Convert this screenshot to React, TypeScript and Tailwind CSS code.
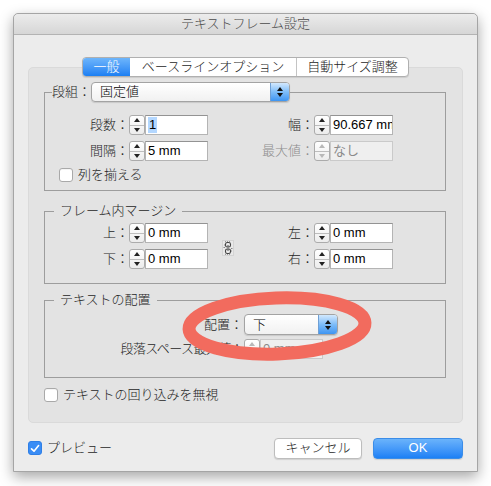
import React from "react";

const FONT = "font-['Liberation_Sans','Noto_Sans_CJK_JP',sans-serif]";

function Spinner({ disabled = false }: { disabled?: boolean }) {
  const fill = disabled ? "#b8b8b8" : "#222";
  return (
    <div className="flex flex-col w-[16px] h-[20px] shrink-0 border border-[#ababab] rounded-[3px] bg-linear-to-b from-white to-[#ececec]">
      <div className="flex-1 flex items-center justify-center border-b border-[#bdbdbd]">
        <svg width="6" height="4" viewBox="0 0 6 4">
          <path d="M3 0L6 4H0Z" fill={fill} />
        </svg>
      </div>
      <div className="flex-1 flex items-center justify-center">
        <svg width="6" height="4" viewBox="0 0 6 4">
          <path d="M0 0H6L3 4Z" fill={fill} />
        </svg>
      </div>
    </div>
  );
}

function Field({
  value,
  selected = false,
  disabled = false,
}: {
  value: string;
  selected?: boolean;
  disabled?: boolean;
}) {
  return (
    <div className="flex h-[20px]">
      <Spinner disabled={disabled} />
      <div
        className={`w-[63px] h-[20px] flex items-center pl-[2px] overflow-hidden whitespace-nowrap text-[13px] leading-[16px] font-normal border ${
          disabled
            ? "bg-[#efefef] border-[#cacaca] text-[#8a8a8a]"
            : "bg-white border-[#b4b4b4] border-t-[#939393] text-black"
        }`}
      >
        {selected ? <span className="bg-[#b3d7ff] px-[1px]">{value}</span> : value}
      </div>
    </div>
  );
}

function Select({ value, width }: { value: string; width: string }) {
  return (
    <div
      className={`${width} h-[20px] flex border border-[#a3a3a3] rounded-[4px] bg-linear-to-b from-white to-[#f1f1f1] shadow-[0_1px_1px_rgba(0,0,0,0.12)]`}
    >
      <div className="flex-1 flex items-center pl-[8px] text-[13px] leading-[16px] text-black">
        {value}
      </div>
      <div className="w-[19px] flex flex-col items-center justify-center gap-[2px] rounded-r-[3px] bg-linear-to-b from-[#d2e8fd] via-[#7dbcf8] to-[#3d95f2] border-l border-[#6f9fd4]">
        <svg width="6" height="4" viewBox="0 0 6 4">
          <path d="M3 0L6 4H0Z" fill="#111" />
        </svg>
        <svg width="6" height="4" viewBox="0 0 6 4">
          <path d="M0 0H6L3 4Z" fill="#111" />
        </svg>
      </div>
    </div>
  );
}

function Group({
  header,
  headerH,
  lead,
  className = "",
  bodyClass = "",
  children,
}: {
  header: React.ReactNode;
  headerH: string;
  lead: string;
  className?: string;
  bodyClass?: string;
  children: React.ReactNode;
}) {
  return (
    <div className={`ml-[15px] mr-[16px] ${className}`}>
      <div className={`flex ${headerH}`}>
        <div className={`${lead} h-1/2 self-end border-l border-t border-[#9d9d9d]`} />
        <div className="flex items-center">{header}</div>
        <div className="flex-1 h-1/2 self-end border-r border-t border-[#9d9d9d]" />
      </div>
      <div className={`border-l border-r border-b border-[#9d9d9d] ${bodyClass}`}>{children}</div>
    </div>
  );
}

function Label({
  w,
  text,
  dim = false,
  tight = false,
}: {
  w: string;
  text: string;
  dim?: boolean;
  tight?: boolean;
}) {
  return (
    <div
      className={`${w} shrink-0 text-right text-[13px] leading-[16px] whitespace-nowrap ${
        tight ? "tracking-[-0.6px]" : ""
      } ${dim ? "text-[#8c8c8c]" : "text-[#1e1e1e]"}`}
    >
      {text}
    </div>
  );
}

function Check({ checked = false }: { checked?: boolean }) {
  if (checked) {
    return (
      <div className="w-[14px] h-[14px] rounded-[3px] bg-[#3a8df5] border border-[#2f7fe6] flex items-center justify-center">
        <svg width="10" height="9" viewBox="0 0 10 9">
          <path d="M1.5 4.8L4 7.2L8.6 1.5" fill="none" stroke="white" strokeWidth="1.6" strokeLinecap="round" strokeLinejoin="round" />
        </svg>
      </div>
    );
  }
  return (
    <div className="w-[14px] h-[14px] rounded-[3px] bg-white border border-[#a9a9a9] shadow-[inset_0_1px_0_rgba(0,0,0,0.04)]" />
  );
}

function LinkIcon() {
  return (
    <svg width="12" height="16" viewBox="0 0 12 16">
      <rect x="0.5" y="0.5" width="11" height="15" fill="#e9e9e9" stroke="#c2c2c2" strokeDasharray="1 1" />
      <path d="M3 1.5H9M3 14.5H9" stroke="#9a9a9a" strokeDasharray="1 1" />
      <rect x="3.5" y="2.5" width="5" height="4.5" rx="1.8" fill="none" stroke="#444" strokeWidth="1.1" />
      <rect x="3.5" y="9" width="5" height="4.5" rx="1.8" fill="none" stroke="#444" strokeWidth="1.1" />
      <path d="M6 5V7.3M6 8.7V11" stroke="#555" strokeWidth="1" />
      <path d="M1.5 7.5H3M9 8.5H10.5M2 5H3M9 11H10" stroke="#888" strokeWidth="1" />
    </svg>
  );
}

export default function App() {
  return (
    <div className={`w-[491px] h-[486px] bg-white p-[13px] font-light ${FONT}`}>
      <div className="relative w-[465px] h-[459px] flex flex-col bg-[#ececec] border border-[#a5a5a5] rounded-t-[5px] shadow-[0_5px_14px_rgba(0,0,0,0.35)]">
        {/* Title bar */}
        <div className="h-[21px] shrink-0 flex items-center justify-center rounded-t-[5px] bg-linear-to-b from-[#ececec] to-[#d6d6d6] border-b border-[#b3b3b3] text-[13px] leading-[16px] text-[#4a4a4a]">
          テキストフレーム設定
        </div>

        <div className="flex-1 flex flex-col px-[14px] pt-[22px]">
          {/* Tabs */}
          <div className="relative z-10 flex justify-center">
            <div className="flex h-[20px] rounded-[4px] border border-[#b0b0b0] bg-white shadow-[0_1px_1px_rgba(0,0,0,0.1)] text-[13px] leading-[16px] text-[#1e1e1e] overflow-hidden">
              <div className="w-[47px] flex items-center justify-center bg-linear-to-b from-[#6db5fb] to-[#1a7ff3] text-white">
                一般
              </div>
              <div className="w-[166px] flex items-center justify-center">ベースラインオプション</div>
              <div className="w-[112px] flex items-center justify-center border-l border-[#c4c4c4]">
                自動サイズ調整
              </div>
            </div>
          </div>

          {/* Panel */}
          <div className="-mt-[10px] h-[356px] shrink-0 flex flex-col pt-[14px] rounded-[5px] bg-[#e3e3e3] border border-[#dadada]">
            {/* 段組 */}
            <Group
              headerH="h-[20px]"
              lead="w-[8px]"
              bodyClass="pt-[13px] pb-[8px]"
              header={
                <div className="flex items-center">
                  <span className="text-[13px] leading-[16px] text-[#1e1e1e]">段組：</span>
                  <Select value="固定値" width="w-[199px]" />
                </div>
              }
            >
              <div className="flex flex-col gap-[6px]">
                <div className="flex items-center">
                  <Label w="w-[84px]" text="段数：" />
                  <Field value="1" selected />
                  <Label w="w-[106px]" text="幅：" />
                  <Field value="90.667 mm" />
                </div>
                <div className="flex items-center">
                  <Label w="w-[84px]" text="間隔：" />
                  <Field value="5 mm" />
                  <Label w="w-[106px]" text="最大値：" dim />
                  <Field value="なし" disabled />
                </div>
              </div>
              <div className="mt-[7px] ml-[14px] h-[14px] flex items-center gap-[5px]">
                <Check />
                <span className="text-[13px] leading-[16px] text-[#1e1e1e]">列を揃える</span>
              </div>
            </Group>

            {/* フレーム内マージン */}
            <Group
              className="mt-[12px]"
              headerH="h-[16px]"
              lead="w-[10px]"
              bodyClass="pt-[4px] pb-[14px]"
              header={
                <span className="px-[6px] text-[13px] leading-[16px] text-[#1e1e1e]">フレーム内マージン</span>
              }
            >
              <div className="flex items-center">
                <div className="flex flex-col gap-[6px]">
                  <div className="flex items-center">
                    <Label w="w-[84px]" text="上：" />
                    <Field value="0 mm" />
                  </div>
                  <div className="flex items-center">
                    <Label w="w-[84px]" text="下：" />
                    <Field value="0 mm" />
                  </div>
                </div>
                <div className="ml-[14px] mt-[3px] w-[12px]">
                  <LinkIcon />
                </div>
                <div className="flex flex-col gap-[6px]">
                  <div className="flex items-center">
                    <Label w="w-[80px]" text="左：" />
                    <Field value="0 mm" />
                  </div>
                  <div className="flex items-center">
                    <Label w="w-[80px]" text="右：" />
                    <Field value="0 mm" />
                  </div>
                </div>
              </div>
            </Group>

            {/* テキストの配置 */}
            <Group
              className="mt-[8px]"
              headerH="h-[16px]"
              lead="w-[10px]"
              bodyClass="pt-[6px] pb-[18px]"
              header={
                <span className="px-[6px] text-[13px] leading-[16px] text-[#1e1e1e]">テキストの配置</span>
              }
            >
              <div className="flex items-center h-[21px]">
                <Label w="w-[198px]" text="配置：" />
                <div className="ml-[1px]">
                  <Select value="下" width="w-[94px] h-[21px]" />
                </div>
              </div>
              <div className="mt-[4px] flex items-center">
                <Label w="w-[198px]" text="段落スペース最大値：" tight />
                <div className="ml-[1px]">
                  <Field value="0 mm" disabled />
                </div>
              </div>
            </Group>

            <div className="mt-[10px] ml-[15px] h-[14px] flex items-center gap-[5px]">
              <Check />
              <span className="text-[13px] leading-[16px] text-[#1e1e1e]">テキストの回り込みを無視</span>
            </div>
          </div>

          {/* Bottom row */}
          <div className="mt-[15px] flex items-center h-[20px]">
            <div className="flex items-center gap-[5px]">
              <Check checked />
              <span className="text-[13px] leading-[16px] text-[#1e1e1e]">プレビュー</span>
            </div>
            <div className="flex-1" />
            <button className="w-[88px] h-[21px] rounded-[4px] bg-white border border-[#bdbdbd] shadow-[0_1px_1px_rgba(0,0,0,0.12)] text-[13px] leading-[16px] text-[#1e1e1e]">
              キャンセル
            </button>
            <button className="ml-[11px] w-[90px] h-[21px] rounded-[4px] bg-linear-to-b from-[#6ab3fb] to-[#1b80f5] border border-[#3b8de8] shadow-[0_1px_1px_rgba(0,0,0,0.12)] text-[13px] leading-[16px] text-white font-normal">
              OK
            </button>
          </div>
        </div>

        {/* Hand-drawn highlight ellipse */}
        <svg
          className="absolute left-[163px] top-[271px] pointer-events-none"
          width="200"
          height="82"
          viewBox="0 0 200 82"
        >
          <ellipse
            cx="100"
            cy="41"
            rx="88"
            ry="28"
            fill="none"
            stroke="#f26b5e"
            strokeWidth="13"
            transform="rotate(-2 100 41)"
          />
        </svg>
      </div>
    </div>
  );
}
